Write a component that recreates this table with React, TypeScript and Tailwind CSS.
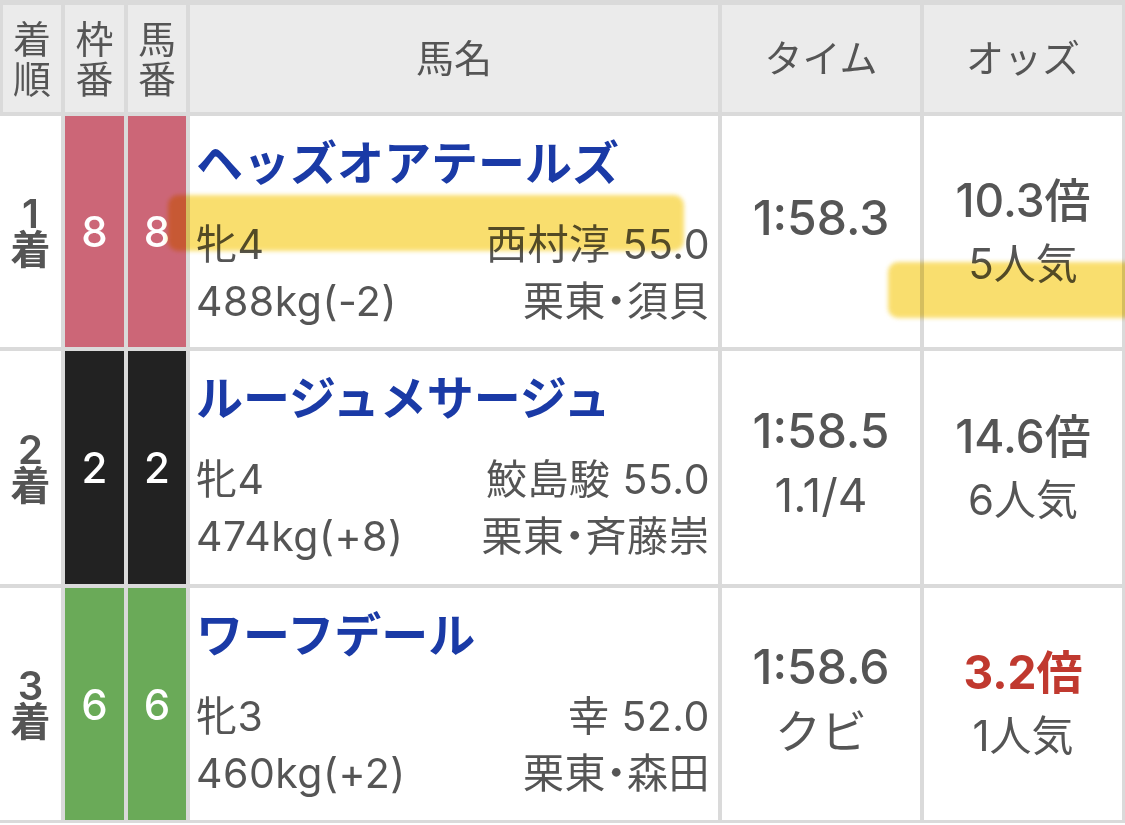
import React from "react";

type Row = {
  rank: string;
  frame: string;
  frameColor: string;
  name: string;
  sexAge: string;
  jockey: string;
  weight: string;
  trainer: string;
  time: string;
  margin: string;
  odds: string;
  oddsHot: boolean;
  pop: string;
};

const rows: Row[] = [
  {
    rank: "1",
    frame: "8",
    frameColor: "bg-[#cc6677]",
    name: "ヘッズオアテールズ",
    sexAge: "牝4",
    jockey: "西村淳 55.0",
    weight: "488kg(-2)",
    trainer: "栗東・須貝",
    time: "1:58.3",
    margin: "",
    odds: "10.3倍",
    oddsHot: false,
    pop: "5人気",
  },
  {
    rank: "2",
    frame: "2",
    frameColor: "bg-[#222222]",
    name: "ルージュメサージュ",
    sexAge: "牝4",
    jockey: "鮫島駿 55.0",
    weight: "474kg(+8)",
    trainer: "栗東・斉藤崇",
    time: "1:58.5",
    margin: "1.1/4",
    odds: "14.6倍",
    oddsHot: false,
    pop: "6人気",
  },
  {
    rank: "3",
    frame: "6",
    frameColor: "bg-[#6aaa58]",
    name: "ワーフデール",
    sexAge: "牝3",
    jockey: "幸 52.0",
    weight: "460kg(+2)",
    trainer: "栗東・森田",
    time: "1:58.6",
    margin: "クビ",
    odds: "3.2倍",
    oddsHot: true,
    pop: "1人気",
  },
];

function ResultRow({row}: {row: Row}) {
  return (
    <>
      {/* 着順 */}
      <div className="bg-white flex flex-col items-center justify-center text-[40px] leading-[36px] font-semibold text-[#555]">
        <span>{row.rank}</span>
        <span>着</span>
      </div>

      {/* 枠番 / 馬番 */}
      <div className={`${row.frameColor} flex items-center justify-center text-white text-[42px] font-medium`}>
        {row.frame}
      </div>
      <div className={`${row.frameColor} flex items-center justify-center text-white text-[42px] font-medium`}>
        {row.frame}
      </div>

      {/* 馬名 */}
      <div className="bg-white pl-[6px] pr-[8px] pt-[20px] text-[#555]">
        <div className="text-[47px] leading-[54px] font-bold text-[#1a3aa6]">{row.name}</div>
        <div className="mt-[26px] flex justify-between text-[41px] leading-[57px] tracking-[0.5px]">
          <span>{row.sexAge}</span>
          <span>{row.jockey}</span>
        </div>
        <div className="flex justify-between text-[41px] leading-[57px] tracking-[0.5px]">
          <span>{row.weight}</span>
          <span className="[font-feature-settings:'palt']">{row.trainer}</span>
        </div>
      </div>

      {/* タイム */}
      <div
        className={`bg-white flex flex-col items-center justify-center text-[#555] ${
          row.margin ? "pb-[10px]" : "pb-[27px]"
        }`}
      >
        <div className="text-[48px] leading-[64px] font-medium">{row.time}</div>
        {row.margin && <div className="text-[46px] leading-[64px]">{row.margin}</div>}
      </div>

      {/* オッズ */}
      <div className="bg-white flex flex-col items-center justify-center text-[#555]">
        <div
          className={`text-[46px] leading-[63px] ${
            row.oddsHot ? "text-[#c0392f] font-bold" : "font-medium"
          }`}
        >
          {row.odds}
        </div>
        <div className="text-[42px] leading-[63px]">{row.pop}</div>
      </div>
    </>
  );
}

export default function App() {
  return (
    <div className="relative w-[1125px] h-[825px] overflow-hidden bg-white font-['Inter','Noto_Sans_CJK_JP',sans-serif]">
      <div className="grid grid-cols-[61px_59px_58px_528px_198px_198px] grid-rows-[107px_231px_233px_232px] gap-[4px] bg-[#dadada] pt-[5px] pr-[3px] pb-[3px]">
        {/* Header */}
        <div className="ml-[3px] bg-[#ebebeb] flex flex-col items-center justify-center text-[38px] leading-[40px] text-[#555]">
          <span>着</span>
          <span>順</span>
        </div>
        <div className="bg-[#ebebeb] flex flex-col items-center justify-center text-[38px] leading-[40px] text-[#555]">
          <span>枠</span>
          <span>番</span>
        </div>
        <div className="bg-[#ebebeb] flex flex-col items-center justify-center text-[38px] leading-[40px] text-[#555]">
          <span>馬</span>
          <span>番</span>
        </div>
        <div className="bg-[#ebebeb] flex items-center justify-center text-[38px] text-[#555]">馬名</div>
        <div className="bg-[#ebebeb] flex items-center justify-center text-[38px] text-[#555]">タイム</div>
        <div className="bg-[#ebebeb] flex items-center justify-center text-[38px] text-[#555]">オッズ</div>

        {rows.map((row) => (
          <ResultRow key={row.rank} row={row} />
        ))}
      </div>

      {/* Highlighter marks */}
      <div className="absolute left-[168px] top-[195px] w-[516px] h-[56px] rounded-[10px] bg-[#f8d64a] opacity-80 mix-blend-multiply blur-[2px]" />
      <div className="absolute left-[888px] top-[262px] w-[260px] h-[56px] rounded-[10px] bg-[#f8d64a] opacity-80 mix-blend-multiply blur-[2px]" />
    </div>
  );
}
